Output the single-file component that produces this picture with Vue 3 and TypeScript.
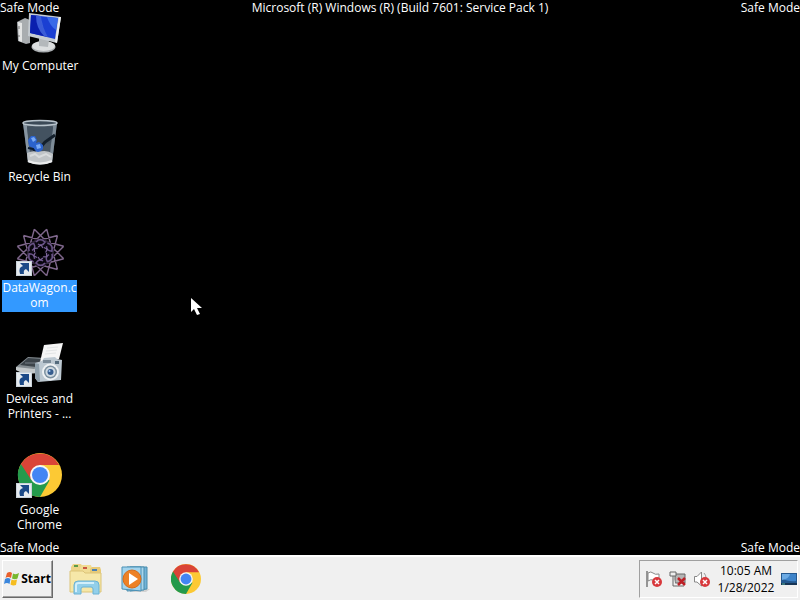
<script setup lang="ts">
import { ref } from 'vue'

interface Shortcut {
  id: string
  label: string
  text: string
  linked: boolean
}

const shortcuts: Shortcut[] = [
  { id: 'computer', label: 'My Computer', text: 'My Computer', linked: false },
  { id: 'bin', label: 'Recycle Bin', text: 'Recycle Bin', linked: false },
  { id: 'wagon', label: 'DataWagon.com', text: 'DataWagon.c\nom', linked: true },
  { id: 'devices', label: 'Devices and Printers', text: 'Devices and\nPrinters - ...', linked: true },
  { id: 'chrome', label: 'Google Chrome', text: 'Google\nChrome', linked: true },
]

const selected = ref('wagon')

// Joins every `step`-th of `count` points on a circle.
function star(count: number, step: number, radius: number, turn: number): string {
  let d = ''
  for (let i = 0; i < count; i++) {
    const from = ((i * 2) / count + turn) * Math.PI
    const to = (((i + step) * 2) / count + turn) * Math.PI
    d += `M${(24.5 + radius * Math.cos(from)).toFixed(1)} ${(24.5 + radius * Math.sin(from)).toFixed(1)}`
    d += `L${(24.5 + radius * Math.cos(to)).toFixed(1)} ${(24.5 + radius * Math.sin(to)).toFixed(1)}`
  }
  return d
}

const outerStar = star(12, 4, 24, 1 / 12)
const petals = [0, 60, 120, 180, 240, 300]
</script>

<template>
  <div class="screen">
    <main class="desktop">
      <header class="marks">
        <span>Safe Mode</span>
        <span>Microsoft (R) Windows (R) (Build 7601: Service Pack 1)</span>
        <span>Safe Mode</span>
      </header>

      <nav class="shortcuts" aria-label="Desktop">
        <button
          v-for="item in shortcuts"
          :key="item.id"
          type="button"
          class="shortcut"
          :class="{ selected: selected === item.id }"
          :aria-label="item.label"
          @click="selected = item.id"
        >
          <svg class="picture" viewBox="0 0 48 48" aria-hidden="true">
            <g v-if="item.id === 'computer'">
              <path d="M1 16L9 12L14 14V37L10 38L2 35Z" fill="#a9adb0" />
              <path d="M2 16L6 17V36L3 35Z" fill="#e4e5e5" />
              <path d="M3 20v3M3 29v2" stroke="#777" />
              <ellipse cx="27.500" cy="41" rx="12" ry="5.500" fill="#a9adb0" />
              <ellipse cx="27.500" cy="40" rx="11.500" ry="5" fill="#dcdedf" />
              <path d="M23 31L33 34L32 41L23 40Z" fill="#b4b8bb" />
              <path d="M13 7L45 11L41 37L12 30Z" fill="#c6ccd2" />
              <path d="M43 11L45 11L41 37L39 36Z" fill="#eceeef" />
              <path d="M15 9L42 12L39 33L14 27Z" fill="#1b3fd2" />
              <path d="M15 9L25 10Q25 20 32 31L14 27Z" fill="#0a1fae" />
              <path d="M20 10L25 10Q26 21 32 31L28 30Q20 22 20 10Z" fill="#5b86f2" opacity=".6" />
              <path d="M31 11L42 12L40 24Q34 20 31 11Z" fill="#396ae8" />
            </g>
            <g v-else-if="item.id === 'bin'">
              <path d="M7 6L12 45Q24 50 36 45L41 6Z" fill="#4a5763" />
              <path d="M7 6L12 45L15 46L11 9Z" fill="#8795a1" />
              <path d="M41 6L36 45L33 46L37 9Z" fill="#7d8b97" />
              <path d="M11 10L37 10L35 26L13 30Z" fill="#435260" />
              <path d="M24 31L29 25L39 18" stroke="#14202c" stroke-width="3" fill="none" />
              <path d="M12 23l3-4 4 0 2 4-1 3 3-1 4 3 0 4-3 3-5 0-2-4-4-2Z" fill="#2c63cc" />
              <path d="M15 21l3-1 2 3-3 2ZM20 28l4-1 1 4-4 1Z" fill="#7aabf5" />
              <path d="M12 31l5 1 3 4" stroke="#0b1b33" stroke-width="2" fill="none" />
              <path d="M11 36Q17 33 22 35Q31 32 37 37L36 45Q24 50 12 45Z" fill="#c0c4c7" />
              <path d="M14 39l5-2 4 3 7-3 5 3" stroke="#d8dbdd" stroke-width="2" fill="none" />
              <path d="M12 44Q24 49 36 44" stroke="#eaebec" stroke-width="2" fill="none" />
              <ellipse cx="24" cy="6" rx="17" ry="2.500" fill="#3c4a57" stroke="#b9c4cc" stroke-width="1.500" />
            </g>
            <g v-else-if="item.id === 'wagon'" fill="none">
              <path :d="outerStar" stroke="#7f678c" stroke-width="1.400" />
              <circle cx="24.500" cy="24.500" r="9" stroke="#0d0915" stroke-width="10" opacity=".7" />
              <g
                v-for="angle in petals"
                :key="angle"
                :transform="`rotate(${angle} 24.5 24.5)`"
              >
                <path d="M20 14Q24 9 29 14Q26 19 22 16" stroke="#6b558a" stroke-width="1.500" />
                <path d="M22 19l3-2 2 3" stroke="#7c6698" stroke-width="1.200" />
              </g>
            </g>
            <g v-else-if="item.id === 'devices'">
              <path d="M0 28L12 18L29 19L25 33L8 34L0 31Z" fill="#858d92" />
              <path d="M4 26L12 19L28 20L20 28Z" fill="#3b4349" />
              <path d="M9 24L25 24" stroke="#767f86" stroke-width="1" />
              <path d="M0 28L18 30L24 27V34L8 35L0 31Z" fill="#c3c8ca" />
              <path d="M28 6L47 4L43 20L24 23Z" fill="#f5f5f5" />
              <path d="M31 9l11-1M30 12l11-1M29 15l11-1" stroke="#e2e4e5" />
              <path d="M19 24L26 22L28 19L39 18L41 20L46 21L45 41L22 43L19 39Z" fill="#bcc8d1" />
              <path d="M19 24L23 25L24 42L22 43L19 39Z" fill="#8e9fab" />
              <path d="M27 21h8v3h-8Z" fill="#7b8b98" />
              <path d="M39 22h4v3h-4Z" fill="#536a7c" />
              <circle cx="34.500" cy="33" r="8.500" fill="#eef1f3" />
              <circle cx="34.500" cy="33" r="6.500" fill="#7b909f" />
              <circle cx="34.500" cy="33" r="5" fill="#d0dae2" />
              <circle cx="34.500" cy="33" r="3" fill="#365d8e" />
              <circle cx="33.500" cy="32" r="1" fill="#a8cdf5" />
            </g>
            <g v-else>
              <circle cx="24" cy="25" r="22" fill="#fcc934" />
              <path d="M24 25L4.900 14A22 22 0 0 0 24 47L33.500 30.500Z" fill="#249a4c" />
              <path d="M4.900 14A22 22 0 0 1 43.100 15H24L15.300 30Z" fill="#da4437" />
              <circle cx="24" cy="25" r="10" fill="#f6f6f6" />
              <circle cx="24" cy="25" r="8" fill="#4285f4" />
            </g>
            <g v-if="item.linked">
              <path d="M0 33H16V48H0Z" fill="#c9d2da" />
              <path d="M1 34H15V47H1Z" fill="#e6ebef" />
              <path d="M4 46Q2 39 7 38L4 35H13V44L10 41Q7 42 8 46Z" fill="#1c4a88" />
            </g>
          </svg>
          <span class="label">{{ item.text }}</span>
        </button>
      </nav>

      <footer class="marks low">
        <span>Safe Mode</span>
        <span>Safe Mode</span>
      </footer>

      <svg class="pointer" viewBox="0 0 12 18" aria-hidden="true">
        <path d="M0 0V14L3 11L6 17L9 16L6 10H11Z" fill="#fff" />
      </svg>
    </main>

    <div class="taskbar">
      <button type="button" class="start">
        <svg class="flag" viewBox="0 0 16 16" aria-hidden="true">
          <path d="M3 2Q6 0 8 2L7 7Q4 5 1.500 7Z" fill="#e8602c" />
          <path d="M9 2.500Q12 4 15 2L13.500 7.500Q11 9 8 7.500Z" fill="#78b82e" />
          <path d="M1 8Q4 6 6.500 8L5.500 13Q3 11 0 13Z" fill="#3b86dc" />
          <path d="M7.500 8.500Q10 10 13 8.500L12 14Q9 15 6.500 13.500Z" fill="#f5bd20" />
        </svg>
        <span>Start</span>
      </button>

      <div class="pins">
        <button type="button" class="pin" aria-label="Windows Explorer">
          <svg class="explorer" viewBox="0 0 34 32" aria-hidden="true">
            <path d="M2 4L4 1H12L14 4V28H2Z" fill="#ecd488" />
            <path d="M11 5L13 2H22L23 5V28H11Z" fill="#f0dc94" />
            <path d="M21 6L23 4H31L32 7V28H21Z" fill="#e8ca76" />
            <path d="M1 8H14L16 10H32V29H1Z" fill="#f6e7a8" stroke="#dcc478" />
            <path d="M5 3h4" stroke="#5c9b48" stroke-width="2" />
            <path d="M14 5h4" stroke="#ca5641" stroke-width="2" />
            <path d="M23 7h5" stroke="#4b80b4" stroke-width="2" />
            <path d="M5 31V22Q5 18 9 18H26Q30 18 30 22V31H24V26Q24 24 22 24H14Q12 24 12 26V31Z" fill="#92cfea" stroke="#6bb2d4" />
            <path d="M7 29V22Q7 20 10 20H25" stroke="#d2effb" stroke-width="2" fill="none" />
          </svg>
        </button>
        <button type="button" class="pin" aria-label="Windows Media Player">
          <svg class="player" viewBox="0 0 30 28" aria-hidden="true">
            <path d="M20 24H29L25 27H10Z" fill="#d2d2d2" />
            <path d="M9 2H26V24L9 26Z" fill="#72b3d8" stroke="#488cac" />
            <path d="M6 2H23V25L6 26Z" fill="#a8d5ec" stroke="#488cac" />
            <path d="M1 2H20V26L1 24Z" fill="#a3d4ee" stroke="#4a91b6" />
            <circle cx="11" cy="14" r="9" fill="#ed8126" stroke="#d66b19" />
            <path d="M8 8L17 14L8 20Z" fill="#fff" />
          </svg>
        </button>
        <button type="button" class="pin" aria-label="Google Chrome">
          <svg class="browser" viewBox="2 3 44 44" aria-hidden="true">
            <circle cx="24" cy="25" r="22" fill="#fcc934" />
            <path d="M24 25L4.900 14A22 22 0 0 0 24 47L33.500 30.500Z" fill="#249a4c" />
            <path d="M4.900 14A22 22 0 0 1 43.100 15H24L15.300 30Z" fill="#da4437" />
            <circle cx="24" cy="25" r="10" fill="#f6f6f6" />
            <circle cx="24" cy="25" r="8" fill="#4285f4" />
          </svg>
        </button>
      </div>

      <div class="tray">
        <button type="button" class="status" aria-label="Action Center">
          <svg viewBox="0 0 18 18" aria-hidden="true">
            <path d="M2 1V17" stroke="#777" stroke-width="1.500" />
            <path d="M3 3Q6 1 8 3Q10 5 14 4V11Q11 12 8 10Q6 9 3 11Z" fill="#fff" stroke="#888" />
            <circle cx="12" cy="12" r="5" fill="#d8383c" />
            <path d="M10 10l4 4M14 10l-4 4" stroke="#fff" stroke-width="1.500" />
          </svg>
        </button>
        <button type="button" class="status" aria-label="Network">
          <svg viewBox="0 0 18 18" aria-hidden="true">
            <path d="M6 4H16V13H6Z" fill="#b5b5b5" stroke="#666" />
            <path d="M7 16h8" stroke="#666" />
            <path d="M1 2H7V6H1ZM4 6V16H7" stroke="#666" fill="#eee" />
            <path d="M9 8L16 15M16 8L9 15" stroke="#bd1f25" stroke-width="2.500" />
          </svg>
        </button>
        <button type="button" class="status" aria-label="Volume">
          <svg viewBox="0 0 18 18" aria-hidden="true">
            <path d="M1.500 6.500H4L8.500 2V16L4 12H1.500Z" fill="#fff" stroke="#888" />
            <path d="M11 3Q13 5 13 8" stroke="#999" fill="none" />
            <circle cx="12" cy="12" r="5" fill="#d8383c" />
            <path d="M10 10l4 4M14 10l-4 4" stroke="#fff" stroke-width="1.500" />
          </svg>
        </button>
        <button type="button" class="clock">
          <span>10:05 AM</span>
          <span>1/28/2022</span>
        </button>
        <button type="button" class="show" aria-label="Show desktop">
          <svg viewBox="0 0 16 16" aria-hidden="true">
            <path d="M0 2H16V14H0Z" fill="#24588f" />
            <path d="M1 3H15V10Q7 11 1 7Z" fill="#3d83c9" />
            <path d="M1 3H9Q8 8 1 9Z" fill="#6baae4" />
            <path d="M0 12H16V14H0Z" fill="#173555" />
            <path d="M1 13h3" stroke="#58b7a2" />
          </svg>
        </button>
      </div>
    </div>
  </div>
</template>

<style>
body {
  background: #000;
}
</style>

<style scoped>
.screen {
  display: flex;
  flex-direction: column;
  min-height: 100vh;
  background: #000;
  color: #fff;
  font-family: "Open Sans", "Noto Sans", sans-serif;
  font-size: 12px;
  line-height: 15px;
}

button {
  margin: 0;
  padding: 0;
  border: 0;
  background: none;
  color: inherit;
  font: inherit;
}

svg {
  display: block;
}

.desktop {
  position: relative;
  flex: 1;
}

.marks {
  position: absolute;
  top: 0;
  left: 0;
  right: 0;
  z-index: 1;
  display: flex;
  justify-content: space-between;
  pointer-events: none;
}

.marks.low {
  top: auto;
  bottom: 0;
}

.shortcuts {
  display: grid;
  grid-auto-rows: 111px;
  justify-content: start;
}

.shortcut {
  display: flex;
  flex-direction: column;
  align-items: center;
  gap: 4px;
  width: 79px;
  padding-top: 6px;
}

.picture {
  width: 48px;
  height: 48px;
}

.label {
  width: 75px;
  padding-bottom: 2px;
  text-align: center;
  white-space: pre;
}

.selected .label {
  background: #3399ff;
}

.pointer {
  position: absolute;
  left: 191px;
  top: 298px;
  width: 12px;
  height: 18px;
}

.taskbar {
  display: flex;
  align-items: center;
  height: 45px;
  box-sizing: border-box;
  padding: 0 2px;
  border-top: 2px solid #fff;
  background: #f0f0f0;
  color: #000;
}

.start {
  display: flex;
  align-items: center;
  justify-content: center;
  gap: 1px;
  width: 51px;
  height: 38px;
  border: 1px solid;
  border-color: #fff #696969 #696969 #fff;
  box-shadow: inset -1px -1px #a0a0a0;
  font-weight: 700;
}

.flag {
  width: 16px;
  height: 16px;
}

.pins {
  display: flex;
  flex: 1;
  padding-left: 8px;
}

.pin {
  display: grid;
  place-items: center;
  width: 50px;
  height: 38px;
}

.explorer {
  width: 34px;
  height: 32px;
}

.player {
  width: 30px;
  height: 28px;
}

.browser {
  width: 30px;
  height: 30px;
}

.tray {
  display: flex;
  align-items: center;
  gap: 6px;
  height: 38px;
  box-sizing: border-box;
  padding-left: 5px;
  border: 1px solid;
  border-color: #a0a0a0 #fff #fff #a0a0a0;
}

.status svg {
  width: 18px;
  height: 18px;
}

.clock {
  display: flex;
  flex-direction: column;
  align-items: center;
  gap: 2px;
  min-width: 58px;
}

.show svg {
  width: 16px;
  height: 16px;
}
</style>
